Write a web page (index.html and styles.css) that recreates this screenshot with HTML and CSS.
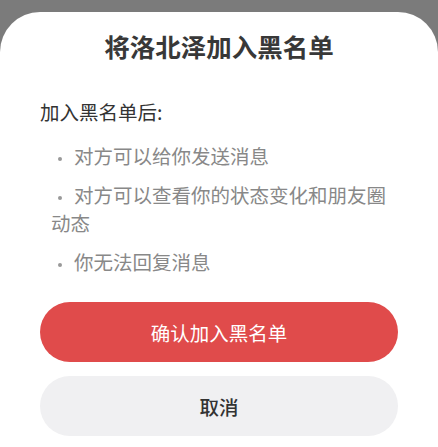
FILE: index.html
```html
<!DOCTYPE html>
<html lang="zh-CN">
<head>
  <meta charset="UTF-8">
  <meta name="viewport" content="width=device-width, initial-scale=1.0">
  <title>加入黑名单</title>
  <link rel="stylesheet" href="styles.css">
</head>
<body>
  <div class="sheet">
    <h2 class="sheet-title">将洛北泽加入黑名单</h2>
    <p class="sheet-lead">加入黑名单后:</p>
    <ul class="sheet-list">
      <li><span class="dot"></span>对方可以给你发送消息</li>
      <li><span class="dot"></span>对方可以查看你的状态变化和朋友圈动态</li>
      <li><span class="dot"></span>你无法回复消息</li>
    </ul>
    <div class="sheet-actions">
      <button class="btn btn-danger">确认加入黑名单</button>
      <button class="btn btn-cancel">取消</button>
    </div>
  </div>
</body>
</html>
```

FILE: styles.css
```css
body {
  margin: 0;
  height: 447px;
  overflow: hidden;
  background-color: #7b7b7b;
  font-family: "Noto Sans CJK SC", "Noto Sans", sans-serif;
}
.sheet {
  margin-top: 12px;
  height: 435px;
  box-sizing: border-box;
  padding: 17px 40px 0;
  background-color: #fff;
  border-radius: 40px 40px 0 0;
}
.sheet-title {
  margin: 0;
  font-size: 25.5px;
  line-height: 34px;
  font-weight: bold;
  color: #383838;
  text-align: center;
}
.sheet-lead {
  margin: 35px 0 0;
  font-size: 19.5px;
  line-height: 28px;
  color: #333;
}
.sheet-list {
  list-style: none;
  margin: 16px 0 0;
  padding: 0 0 0 11px;
}
.sheet-list li {
  font-size: 19.5px;
  line-height: 28px;
  color: #888;
  margin-bottom: 11px;
}
.dot {
  display: inline-block;
  width: 4px;
  height: 4px;
  border-radius: 50%;
  background-color: #999;
  margin: 0 12px 0 7px;
  vertical-align: middle;
}
.sheet-actions {
  display: flex;
  flex-direction: column;
  gap: 14px;
  margin-top: 26px;
}
.btn {
  height: 60px;
  border: none;
  border-radius: 30px;
  font-family: inherit;
  font-size: 19.5px;
  cursor: pointer;
}
.btn-danger {
  background-color: #e04b4b;
  color: #fff;
  font-weight: 400;
}
.btn-cancel {
  background-color: #f0f0f2;
  color: #333;
  font-weight: 500;
}
```
